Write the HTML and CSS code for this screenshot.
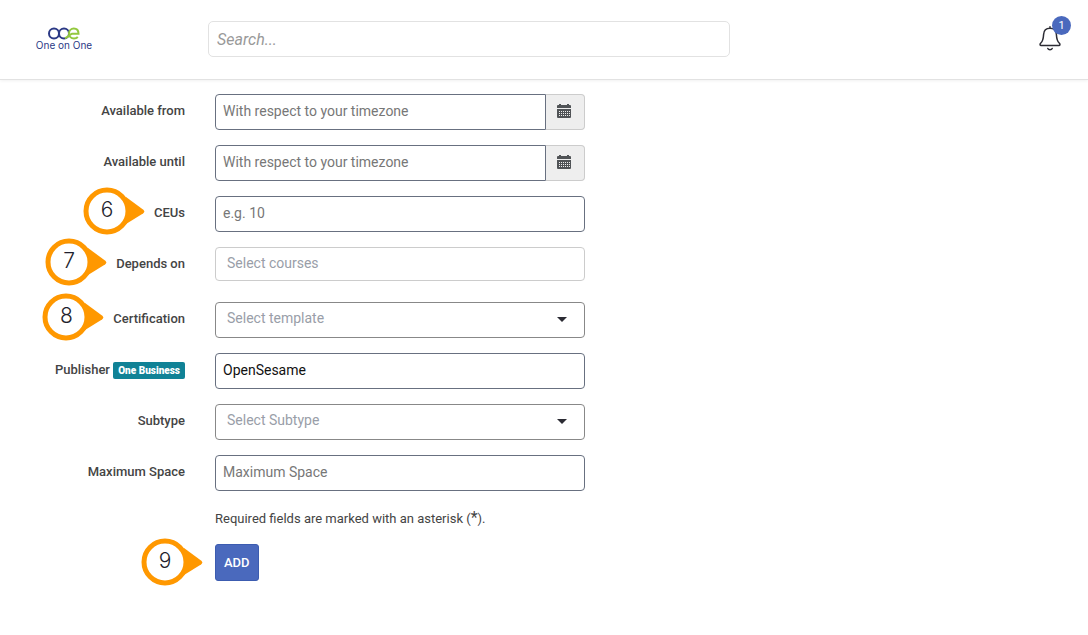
FILE: index.html
```html
<!DOCTYPE html>
<html lang="en">
<head>
  <meta charset="UTF-8">
  <meta name="viewport" content="width=device-width, initial-scale=1">
  <title>One on One - Add Course</title>
  <link rel="stylesheet" href="styles.css">
</head>
<body>

  <header class="topbar">
    <a class="logo" href="#" aria-label="One on One">
      <svg class="logo-mark" viewBox="0 0 32 13" fill="none" stroke-width="2">
        <circle cx="6" cy="6.5" r="5" stroke="#2c3a86"/>
        <path d="M11 6.500C11 3.500 13.300 1.500 16 1.500S21 3.500 21 6.500 18.700 11.500 16 11.500 11 9.500 11 6.500" stroke="#2c3a86"/>
        <path d="M17 11.300C21 10 21.500 7.300 24 6.800h6.500C30.500 3.500 28.500 1.500 25.800 1.500S21 3.700 21 6.500s2 5 5 5c1.600 0 2.800-.5 3.800-1.500" stroke="#93c83e"/>
      </svg>
      <span class="logo-text">One on One</span>
    </a>
    <form class="search" role="search">
      <input class="search-input" type="search" placeholder="Search..." aria-label="Search">
    </form>
    <button class="bell" type="button" aria-label="Notifications">
      <svg class="bell-icon" viewBox="0 0 22 25" fill="none" stroke="#2b2b33" stroke-width="1.500" stroke-linecap="round" stroke-linejoin="round">
        <path d="M11 .8v1.500M11 2.300c-4 0-6.200 2.700-6.400 6.200-.2 4.500-.6 6.700-3 8.800-.9.900-.7 2.200.6 2.200h17.600c1.300 0 1.500-1.300.6-2.200-2.400-2.100-2.800-4.300-3-8.800C17.200 5 15 2.300 11 2.300z"/>
        <path d="M8.800 22.500c.7 1.600 3.700 1.600 4.400 0"/>
      </svg>
      <span class="bell-count">1</span>
    </button>
  </header>

  <main>
    <form class="course-form">
      <div class="row">
        <label class="label" for="available-from">Available from</label>
        <div class="date-group">
          <input class="field" type="text" id="available-from" placeholder="With respect to your timezone">
          <button class="date-button" type="button" aria-label="Pick start date">
            <svg class="calendar-icon" viewBox="0 0 14 14">
              <path fill="#505356" d="M0 2a1 1 0 0 1 1-1h1V0h2v1h6V0h2v1h1a1 1 0 0 1 1 1v2H0zM0 5h14v8a1 1 0 0 1-1 1H1a1 1 0 0 1-1-1z"/>
              <path stroke="#eee" stroke-dasharray="1 1" d="M2 7.500h11M2 9.500h11M2 11.500h11"/>
            </svg>
          </button>
        </div>
      </div>

      <div class="row">
        <label class="label" for="available-until">Available until</label>
        <div class="date-group">
          <input class="field" type="text" id="available-until" placeholder="With respect to your timezone">
          <button class="date-button" type="button" aria-label="Pick end date">
            <svg class="calendar-icon" viewBox="0 0 14 14">
              <path fill="#505356" d="M0 2a1 1 0 0 1 1-1h1V0h2v1h6V0h2v1h1a1 1 0 0 1 1 1v2H0zM0 5h14v8a1 1 0 0 1-1 1H1a1 1 0 0 1-1-1z"/>
              <path stroke="#eee" stroke-dasharray="1 1" d="M2 7.500h11M2 9.500h11M2 11.500h11"/>
            </svg>
          </button>
        </div>
      </div>

      <div class="row">
        <div class="label">
          <span class="anchor">
            <span class="marker">
              <svg class="marker-shape" viewBox="0 0 62 48"><path fill="#ff9800" d="M43 10 60 22.500q2.500 2 0 4L43 37z"/><circle cx="24" cy="24" r="21" fill="#fff" stroke="#ff9800" stroke-width="5"/></svg>
              <span class="marker-number">6</span>
            </span>
            <label for="ceus">CEUs</label>
          </span>
        </div>
        <input class="field" type="text" id="ceus" placeholder="e.g. 10">
      </div>

      <div class="row row-courses">
        <div class="label">
          <span class="anchor">
            <span class="marker">
              <svg class="marker-shape" viewBox="0 0 62 48"><path fill="#ff9800" d="M43 10 60 22.500q2.500 2 0 4L43 37z"/><circle cx="24" cy="24" r="21" fill="#fff" stroke="#ff9800" stroke-width="5"/></svg>
              <span class="marker-number">7</span>
            </span>
            <label for="depends-on">Depends on</label>
          </span>
        </div>
        <input class="field field-courses" type="text" id="depends-on" placeholder="Select courses">
      </div>

      <div class="row">
        <div class="label">
          <span class="anchor">
            <span class="marker">
              <svg class="marker-shape" viewBox="0 0 62 48"><path fill="#ff9800" d="M43 10 60 22.500q2.500 2 0 4L43 37z"/><circle cx="24" cy="24" r="21" fill="#fff" stroke="#ff9800" stroke-width="5"/></svg>
              <span class="marker-number">8</span>
            </span>
            <label for="certification">Certification</label>
          </span>
        </div>
        <div class="select-wrap">
          <select class="field field-select" id="certification">
            <option value="">Select template</option>
          </select>
        </div>
      </div>

      <div class="row">
        <label class="label" for="publisher">Publisher <span class="tag">One Business</span></label>
        <input class="field" type="text" id="publisher" value="OpenSesame">
      </div>

      <div class="row">
        <label class="label" for="subtype">Subtype</label>
        <div class="select-wrap">
          <select class="field field-select" id="subtype">
            <option value="">Select Subtype</option>
          </select>
        </div>
      </div>

      <div class="row">
        <label class="label" for="max-space">Maximum Space</label>
        <input class="field" type="text" id="max-space" placeholder="Maximum Space">
      </div>

      <div class="row row-end">
        <p class="note">Required fields are marked with an asterisk (<span class="asterisk">*</span>).</p>
      </div>

      <div class="row row-end">
        <div class="actions anchor">
          <span class="marker marker-add">
            <svg class="marker-shape" viewBox="0 0 62 48"><path fill="#ff9800" d="M43 10 60 22.500q2.500 2 0 4L43 37z"/><circle cx="24" cy="24" r="21" fill="#fff" stroke="#ff9800" stroke-width="5"/></svg>
            <span class="marker-number">9</span>
          </span>
          <button class="add-button" type="submit">ADD</button>
        </div>
      </div>
    </form>
  </main>

</body>
</html>
```
FILE: styles.css
```css
* {
  margin: 0;
  padding: 0;
  box-sizing: border-box;
}

body {
  font-family: Roboto, sans-serif;
  font-size: 13px;
  line-height: 20px;
  color: #444;
  background: #fff;
}

input, select, button {
  font: inherit;
}

/* Top bar */
.topbar {
  display: flex;
  align-items: center;
  height: 80px;
  padding: 0 17px 2px 38px;
  border-bottom: 1px solid #e2e2e2;
  box-shadow: 0 1px 3px rgba(0, 0, 0, 0.06);
}

.logo {
  display: flex;
  flex-direction: column;
  align-items: center;
  width: 52px;
  margin-right: 118px;
  text-decoration: none;
}

.logo-mark {
  width: 32px;
  height: 13px;
}

.logo-text {
  font-family: Inter, sans-serif;
  font-size: 10px;
  line-height: 10px;
  color: #2c3a86;
  white-space: nowrap;
}

.search {
  flex: 0 1 522px;
}

.search-input {
  display: block;
  width: 100%;
  height: 36px;
  padding: 2px 8px 0;
  border: 1px solid #e2e2e2;
  border-radius: 5px;
  font-size: 16px;
  appearance: none;
}

.search-input::placeholder {
  color: #999;
  font-style: italic;
}

.bell {
  position: relative;
  margin-left: auto;
  padding: 0 10px 0 0;
  border: none;
  background: none;
  cursor: pointer;
}

.bell-icon {
  display: block;
  width: 22px;
  height: 25px;
}

.bell-count {
  position: absolute;
  top: -10px;
  right: 0;
  width: 19px;
  height: 19px;
  border-radius: 50%;
  font-size: 11px;
  line-height: 19px;
  text-align: center;
  color: #fff;
  background: #4a69bd;
}

/* Course form */
.course-form {
  display: flex;
  flex-direction: column;
  gap: 15px;
  padding: 14px 0 32px;
}

.row {
  display: grid;
  grid-template-columns: 185px minmax(0, 370px);
  column-gap: 30px;
}

.row-courses {
  margin-bottom: 6px;
}

.row-end {
  justify-items: start;
}

.row-end > * {
  grid-column: 2;
}

.label {
  padding-top: 7px;
  font-weight: 500;
  text-align: right;
}

.tag {
  padding: 3px 5px;
  border-radius: 2px;
  font-size: 10px;
  font-weight: 900;
  color: #fff;
  background: #108296;
}

.field {
  display: block;
  width: 100%;
  height: 36px;
  padding: 0 7px 2px;
  border: 1px solid #687080;
  border-radius: 4px;
  font-size: 14px;
  color: #111;
  background: #fff;
}

.field::placeholder {
  color: #777;
}

.field-courses {
  height: 34px;
  padding: 0 11px 2px;
  border-color: #ccc;
}

.field-courses::placeholder {
  color: #999ea8;
}

.date-group {
  display: flex;
}

.date-group .field {
  flex: 1;
  border-radius: 4px 0 0 4px;
}

.date-button {
  width: 39px;
  padding: 0 0 2px 11px;
  border: 1px solid #ccc;
  border-left: none;
  border-radius: 0 4px 4px 0;
  background: #eee;
  cursor: pointer;
}

.calendar-icon {
  display: block;
  width: 14px;
  height: 14px;
}

.select-wrap {
  position: relative;
}

.field-select {
  padding: 0 32px 4px 11px;
  border-color: #888;
  color: #999ea8;
  appearance: none;
}

.select-wrap::after {
  content: "";
  position: absolute;
  top: 15px;
  right: 18px;
  border: 5px solid transparent;
  border-top-color: #2b2b33;
  border-bottom: none;
  pointer-events: none;
}

.note {
  padding-top: 3px;
}

.asterisk {
  font-size: 16px;
  line-height: 16px;
}

.add-button {
  display: block;
  height: 37px;
  padding: 0 8px;
  border: 1px solid #3c5cb0;
  border-radius: 3px;
  font-weight: 500;
  color: #fff;
  background: #4a69bd;
  cursor: pointer;
}

/* Numbered step markers, hung off the left side of their target */
.anchor {
  position: relative;
  display: inline-block;
}

.marker {
  position: absolute;
  top: -16px;
  right: 100%;
  width: 62px;
  height: 48px;
  margin-right: 9px;
}

.marker-add {
  top: -6px;
  margin-right: 12px;
}

.marker-shape {
  display: block;
  width: 62px;
  height: 48px;
}

.marker-number {
  position: absolute;
  top: 0;
  left: 0;
  width: 48px;
  font-family: Inter, sans-serif;
  font-size: 21px;
  font-weight: 300;
  line-height: 46px;
  text-align: center;
  color: #1f1f2e;
}
```
